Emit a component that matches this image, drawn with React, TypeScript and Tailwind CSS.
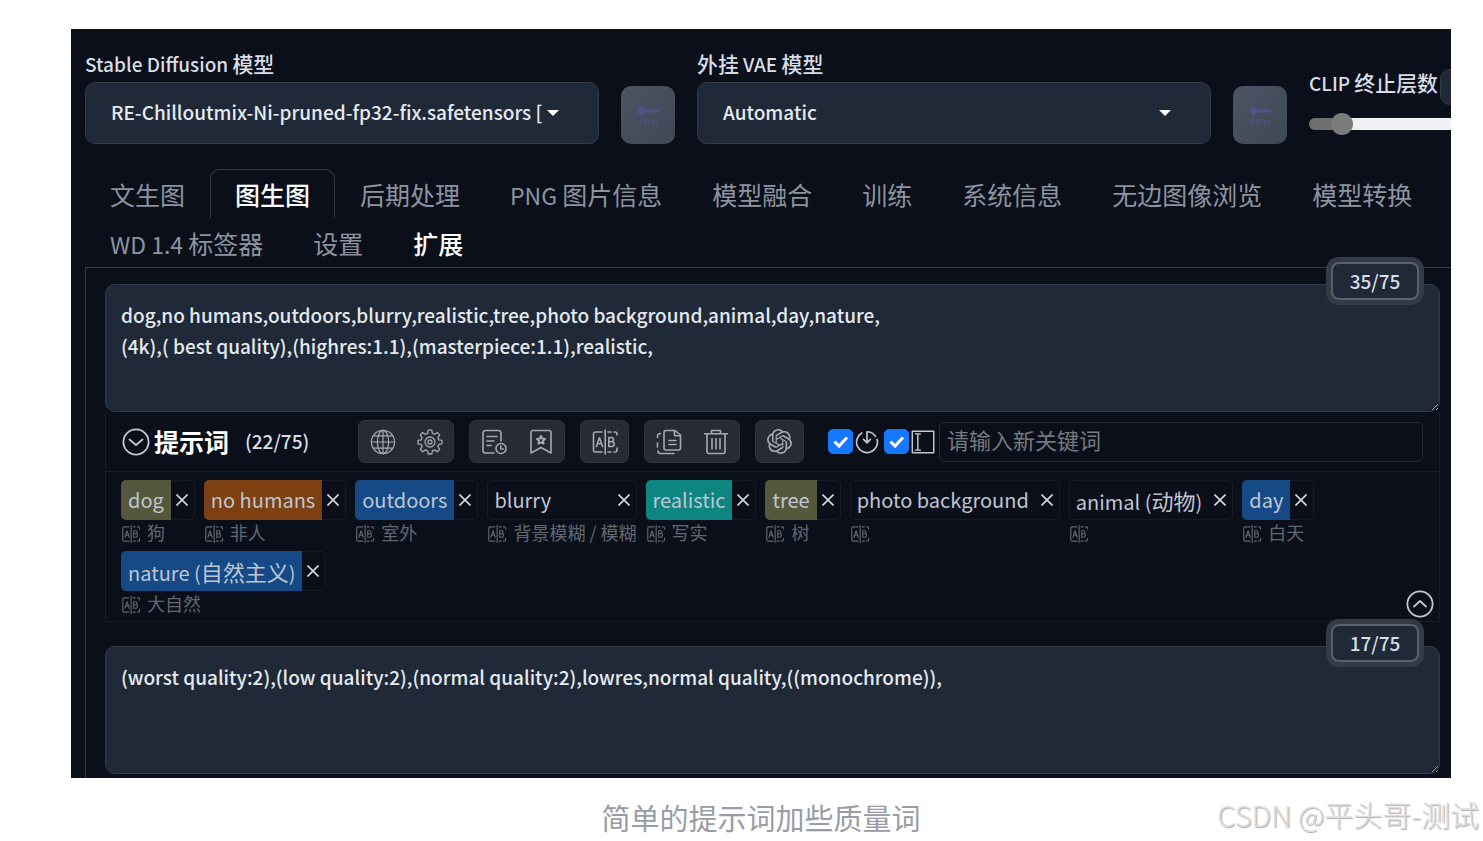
import React, { useState } from 'react';

const CJK_RUN = /([\u3400-\u9fff]+)/;

/** Sets Chinese runs slightly larger than the Latin text beside them. */
function Mixed({ text, cjk = 'text-[1.1em]' }: { text: string; cjk?: string }) {
  return (
    <>
      {text.split(CJK_RUN).map((part, i) =>
        CJK_RUN.test(part) ? (
          <span key={i} className={cjk}>
            {part}
          </span>
        ) : (
          part
        ),
      )}
    </>
  );
}

type IconProps = { className?: string };

function Icon({ className = 'size-7', children }: IconProps & { children: React.ReactNode }) {
  return (
    <svg
      viewBox="0 0 28 28"
      className={className}
      fill="none"
      stroke="currentColor"
      strokeWidth="1.6"
      strokeLinecap="round"
      strokeLinejoin="round"
      aria-hidden="true"
    >
      {children}
    </svg>
  );
}

const GlobeIcon = () => (
  <Icon>
    <g strokeWidth="1.2">
      <circle cx="14" cy="14" r="11.6" />
      <ellipse cx="14" cy="14" rx="5.6" ry="11.6" />
      <path d="M14 2.4v23.2M2.4 14h23.2M4.4 7.8h19.2M4.4 20.2h19.2" />
    </g>
  </Icon>
);

const GearIcon = () => (
  <Icon>
    <g strokeWidth="1.3">
      <path d="M12.2 2.2h3.6l.6 3.2 2.2.9 2.7-1.8 2.4 2.4-1.8 2.7.9 2.3 3.2.5v3.4l-3.2.6-.9 2.2 1.8 2.7-2.4 2.5-2.7-1.9-2.2 1-.6 3.1h-3.6l-.6-3.1-2.2-1-2.7 1.9-2.4-2.5 1.8-2.7-.9-2.2-3.2-.6v-3.4l3.2-.5.9-2.3-1.8-2.7 2.4-2.4 2.7 1.8 2.2-.9z" />
      <circle cx="14" cy="14" r="5" />
      <circle cx="14" cy="14" r="2" />
    </g>
  </Icon>
);

const HistoryIcon = () => (
  <Icon>
    <path d="M14 25H5.500a2.500 2.500 0 0 1-2.500-2.500V5a2.500 2.500 0 0 1 2.500-2.500h13A2.500 2.500 0 0 1 21 5v8" />
    <path d="M7 8.500h10M7 13h7M7 17.500h4" />
    <circle cx="21" cy="20.500" r="5" />
    <path d="M20.800 18v3h2.400" />
  </Icon>
);

const BookmarkIcon = () => (
  <Icon>
    <path d="M4 4.500A2 2 0 0 1 6 2.500h16a2 2 0 0 1 2 2V25l-10-5.500L4 25z" />
    <path d="m14 8 1.200 2.500 2.800.4-2 2 .5 2.700-2.500-1.300-2.500 1.300.5-2.700-2-2 2.800-.4z" strokeWidth="2" />
  </Icon>
);

const TranslateIcon = ({ className }: IconProps) => (
  <Icon className={className}>
    <path d="M11 4H4.500A2 2 0 0 0 2.500 6v16a2 2 0 0 0 2 2H11M14.200 2v24" />
    <path d="M17 4h3M23 4h1a2 2 0 0 1 2 2v1M26 20v2a2 2 0 0 1-2 2h-1M20 24h-3" />
    <path d="m5.500 18.500 3-9 3 9M6.500 15.700h4M17.800 9.500v9h3a2.400 2.400 0 0 0 0-4.800h-3 2.600a2.100 2.100 0 0 0 0-4.200z" />
  </Icon>
);

const CopyIcon = () => (
  <Icon>
    <path d="M9 6V4.500a2 2 0 0 1 2-2h9l5.500 4.500v13a2 2 0 0 1-2 2H11a2 2 0 0 1-2-2V6M19.500 2.800v5h5.500" />
    <path d="M14 12.500h7M14 16.500h7M5.500 5.500H5a2.500 2.500 0 0 0-2.500 2.500v1.500M2.500 15v4M3 23a2.500 2.500 0 0 0 2.500 2.500H19" />
  </Icon>
);

const TrashIcon = () => (
  <Icon>
    <path d="M2.500 5.800h23M9.500 5.500v-3h9v3M5 6v17.500a2 2 0 0 0 2 2h14a2 2 0 0 0 2-2V6" />
    <path d="M10 10.500v10.500M14 10.500v10.500M18 10.500v10.500" />
  </Icon>
);

const KnotIcon = () => (
  <svg viewBox="0 0 24 24" className="size-[25px]" fill="currentColor" aria-hidden="true">
    <path d="M22.2819 9.8211a5.9847 5.9847 0 0 0-.5157-4.9108 6.0462 6.0462 0 0 0-6.5098-2.9A6.0651 6.0651 0 0 0 4.9807 4.1818a5.9847 5.9847 0 0 0-3.9977 2.9 6.0462 6.0462 0 0 0 .7427 7.0966 5.98 5.98 0 0 0 .511 4.9107 6.051 6.051 0 0 0 6.5146 2.9001A5.9847 5.9847 0 0 0 13.2599 24a6.0557 6.0557 0 0 0 5.7718-4.2058 5.9894 5.9894 0 0 0 3.9977-2.9001 6.0557 6.0557 0 0 0-.7475-7.0729zm-9.022 12.6081a4.4755 4.4755 0 0 1-2.8764-1.0408l.1419-.0804 4.7783-2.7582a.7948.7948 0 0 0 .3927-.6813v-6.7369l2.02 1.1686a.071.071 0 0 1 .038.052v5.5826a4.504 4.504 0 0 1-4.4945 4.4944zm-9.6607-4.1254a4.4708 4.4708 0 0 1-.5346-3.0137l.142.0852 4.783 2.7582a.7712.7712 0 0 0 .7806 0l5.8428-3.3685v2.3324a.0804.0804 0 0 1-.0332.0615L9.74 19.9502a4.4992 4.4992 0 0 1-6.1408-1.6464zM2.3408 7.8956a4.485 4.485 0 0 1 2.3655-1.9728V11.6a.7664.7664 0 0 0 .3879.6765l5.8144 3.3543-2.0201 1.1685a.0757.0757 0 0 1-.071 0l-4.8303-2.7865A4.504 4.504 0 0 1 2.3408 7.872zm16.5963 3.8558L13.1038 8.364 15.1192 7.2a.0757.0757 0 0 1 .071 0l4.8303 2.7913a4.4944 4.4944 0 0 1-.6765 8.1042v-5.6772a.79.79 0 0 0-.407-.667zm2.0107-3.0231l-.142-.0852-4.7735-2.7818a.7759.7759 0 0 0-.7854 0L9.409 9.2297V6.8974a.0662.0662 0 0 1 .0284-.0615l4.8303-2.7866a4.4992 4.4992 0 0 1 6.6802 4.66zM8.3065 12.863l-2.02-1.1638a.0804.0804 0 0 1-.038-.0567V6.0742a4.4992 4.4992 0 0 1 7.3757-3.4537l-.142.0805L8.704 5.459a.7948.7948 0 0 0-.3927.6813zm1.0976-2.3654l2.602-1.4998 2.6069 1.4998v2.9994l-2.5974 1.4997-2.6067-1.4997Z" />
  </svg>
);

const ChevronCircle = ({ up = false }: { up?: boolean }) => (
  <Icon>
    <circle cx="14" cy="14" r="12.600" strokeWidth="1.8" />
    <path d={up ? 'm8 16.500 6-5.500 6 5.500' : 'm7.500 11.500 6.500 5.500 6.500-5.500'} strokeWidth="1.8" />
  </Icon>
);

const TimerIcon = () => (
  <Icon className="size-6">
    <path d="M14 2v12.500M14 2a12 12 0 0 1 10 5.500M8 3.500A12.200 12.200 0 1 0 25.800 11M10 11l4 4 4-4" strokeWidth="1.9" />
  </Icon>
);

const CursorBoxIcon = () => (
  <Icon className="size-6">
    <path d="M1.500 1.500h25v25h-25zM5 4.500h6M8 4.500v19M5 23.500h6" strokeWidth="1.7" />
  </Icon>
);

const CloseIcon = () => (
  <svg viewBox="0 0 12 12" className="size-3" stroke="currentColor" strokeWidth="1.6" aria-hidden="true">
    <path d="M.5.5l11 11M11.500.5l-11 11" />
  </svg>
);

function ModelSelect({ id, label, value }: { id: string; label: string; value: string }) {
  return (
    <div className="min-w-0 flex-1">
      <label htmlFor={id} className="block h-8 text-[19px] leading-[26px] font-medium">
        <Mixed text={label} />
      </label>
      <div className="relative">
        <select
          id={id}
          className="h-[62px] w-full appearance-none rounded-[10px] border border-[#333c49] bg-[#1f2937] px-[25px] pb-0.5 text-[19px] font-medium text-[#e5e9f0]"
        >
          <option>{value}</option>
        </select>
        <svg
          viewBox="0 0 12 6"
          className="pointer-events-none absolute top-7 right-10 h-1.5 w-3"
          fill="#fff"
          aria-hidden="true"
        >
          <path d="M0 0h12L6 6z" />
        </svg>
      </div>
    </div>
  );
}

function RefreshButton({ label }: { label: string }) {
  return (
    <button
      type="button"
      aria-label={label}
      className="flex h-[58px] w-[54px] shrink-0 items-center justify-center rounded-[10px] bg-linear-to-br from-[#4b5563] to-[#3f4855]"
    >
      <svg viewBox="0 0 28 28" className="size-7" fill="none" stroke="#57508c" aria-hidden="true">
        <path d="M8 6 4 10l4 4z" fill="#57508c" strokeWidth="2" strokeLinejoin="round" />
        <path d="M8 10h17" strokeWidth="3" />
        <path d="M6 19h5v6M6 19v6M14 19v6M14 19h3M19 19v6M23 19v6" strokeWidth="1.4" opacity=".7" />
      </svg>
    </button>
  );
}

const TABS = [
  '文生图', '图生图', '后期处理', 'PNG 图片信息', '模型融合', '训练', '系统信息',
  '无边图像浏览', '模型转换', 'WD 1.4 标签器', '设置', '扩展',
];

function tabClass(tab: string) {
  if (tab === '图生图') return 'rounded-t-[10px] border-[#343a45] font-medium text-white';
  if (tab === '扩展') return 'border-transparent font-medium text-white';
  return 'border-transparent text-[#8d94a0]';
}

function PromptBox({ label, count, value }: { label: string; count: string; value: string }) {
  const [text, setText] = useState(value);
  return (
    <div className="relative">
      <textarea
        aria-label={label}
        value={text}
        onChange={(e) => setText(e.target.value)}
        spellCheck={false}
        className="block h-32 w-full resize-y rounded-[10px] border border-[#343c48] bg-[#1f2937] px-[15px] py-[14px] text-[19px] leading-[31px] font-medium text-[#e5e9f0] outline-none"
      />
      <span className="absolute -top-[22px] right-[21px] flex h-[38px] w-[88px] items-center justify-center rounded-lg border-2 border-[#59616d] bg-[#1f2937] text-[19px] font-medium ring-5 ring-[#343b47]">
        {count}
      </span>
    </div>
  );
}

const TOOLS = [
  [['语言', GlobeIcon], ['设置', GearIcon]],
  [['历史', HistoryIcon], ['收藏', BookmarkIcon]],
  [['翻译', TranslateIcon]],
  [['复制', CopyIcon], ['清空', TrashIcon]],
  [['生成', KnotIcon]],
] as [string, React.ComponentType][][];

type Tag = { name: string; note: string; color?: string };

const OLIVE = 'bg-[#55583c]';
const BLUE = 'bg-[#154a86]';

const TAGS: Tag[] = [
  { name: 'dog', note: '狗', color: OLIVE },
  { name: 'no humans', note: '非人', color: 'bg-[#7d4010]' },
  { name: 'outdoors', note: '室外', color: BLUE },
  { name: 'blurry', note: '背景模糊 / 模糊' },
  { name: 'realistic', note: '写实', color: 'bg-[#0d8580]' },
  { name: 'tree', note: '树', color: OLIVE },
  { name: 'photo background', note: '' },
  { name: 'animal (动物)', note: '' },
  { name: 'day', note: '白天', color: BLUE },
  { name: 'nature (自然主义)', note: '大自然', color: BLUE },
];

function TagItem({ tag }: { tag: Tag }) {
  return (
    <li>
      <div className="flex h-10 justify-between rounded-[5px] border border-[#181c26] text-xl leading-10 text-[#bfc6d2]">
        <span className={`-m-px h-10 rounded-l-[5px] px-[7px] whitespace-nowrap ${tag.color ?? ''}`}>
          <Mixed text={tag.name} />
        </span>
        <button
          type="button"
          aria-label={`删除 ${tag.name}`}
          className="flex w-6 items-center justify-center text-[#d5d9e0]"
        >
          <CloseIcon />
        </button>
      </div>
      <div className="flex h-[26px] gap-1.5 text-[18px] leading-6 whitespace-nowrap text-[#636771]">
        <TranslateIcon className="mt-1 size-5" />
        {tag.note}
      </div>
    </li>
  );
}

function CheckOption({ label, children }: { label: string; children: React.ReactNode }) {
  return (
    <label className="flex items-center gap-0.5">
      <span className="relative flex">
        <input
          type="checkbox"
          defaultChecked
          aria-label={label}
          className="peer size-[25px] appearance-none rounded-[5px] border border-[#1677ff] checked:bg-[#1677ff]"
        />
        <svg
          viewBox="0 0 25 25"
          className="pointer-events-none absolute inset-0 hidden peer-checked:block"
          fill="none"
          stroke="#fff"
          strokeWidth="3"
          aria-hidden="true"
        >
          <path d="m6.500 12.500 4.500 4.500 8-8.500" />
        </svg>
      </span>
      {children}
    </label>
  );
}

export default function App() {
  return (
    <div className="min-h-screen overflow-x-hidden bg-white pt-[29px] font-['Noto_Sans_CJK_SC',sans-serif]">
      <main className="mr-8 ml-[71px] overflow-hidden bg-[#0b0f19] pt-[21px] pl-3.5 text-[#d9dde6]">
        <div className="flex items-end gap-[22px]">
          <ModelSelect
            id="model"
            label="Stable Diffusion 模型"
            value="RE-Chilloutmix-Ni-pruned-fp32-fix.safetensors ["
          />
          <RefreshButton label="刷新模型" />
          <ModelSelect id="vae" label="外挂 VAE 模型" value="Automatic" />
          <RefreshButton label="刷新 VAE" />
          <div className="w-[142px] shrink-0 self-stretch pt-[19px]">
            <div className="flex h-9 w-[264px]">
              <label htmlFor="clip" className="w-[131px] shrink-0 text-[19px] leading-[26px] font-medium whitespace-nowrap">
                <Mixed text="CLIP 终止层数" />
              </label>
              <input
                type="number"
                aria-label="CLIP 终止层数数值"
                defaultValue={2}
                className="h-9 w-20 rounded-[10px] border border-[#333c49] bg-[#1f2937] px-5 text-[19px]"
              />
            </div>
            <input
              id="clip"
              type="range"
              min={1}
              max={12}
              defaultValue={2}
              className="mt-[13px] block h-3 w-[264px] appearance-none rounded-md bg-linear-to-r from-[#6f6f70] from-[33px] to-[#eff1f5] to-[33px] [&::-webkit-slider-thumb]:size-[22px] [&::-webkit-slider-thumb]:appearance-none [&::-webkit-slider-thumb]:rounded-full [&::-webkit-slider-thumb]:bg-[#7b7b7c]"
            />
          </div>
        </div>

        <nav className="mt-[25px] flex flex-wrap">
          {TABS.map((tab) => (
            <button
              key={tab}
              type="button"
              className={`h-[49px] border-x border-t px-6 text-[23px] leading-[48px] whitespace-nowrap ${tabClass(tab)}`}
            >
              <Mixed text={tab} cjk="text-[25px]" />
            </button>
          ))}
        </nav>

        <div className="border-t border-l border-[#343a45] pt-4 pr-[11px] pb-[3px] pl-[19px]">
          <PromptBox
            label="正向提示词"
            count="35/75"
            value={
              'dog,no humans,outdoors,blurry,realistic,tree,photo background,animal,day,nature,\n(4k),( best quality),(highres:1.1),(masterpiece:1.1),realistic,'
            }
          />

          <section className="relative border-x border-b border-[#181d28]">
            <header className="flex h-[60px] items-center border-b border-[#181d28] px-4">
              <button type="button" aria-label="折叠" className="text-[#c4c8d0]">
                <ChevronCircle />
              </button>
              <h2 className="ml-1 pb-0.5 text-[25px] leading-10 font-bold text-white">提示词</h2>
              <span className="ml-4 w-[113px] text-[19px] font-medium">(22/75)</span>
              <div className="flex gap-[15px]">
                {TOOLS.map((group, i) => (
                  <div key={i} className="flex h-[43px] rounded-[7px] border border-[#30343f] bg-[#272b36] text-[#a4a9b3]">
                    {group.map(([label, Glyph]) => (
                      <button
                        key={label}
                        type="button"
                        aria-label={label}
                        className="flex w-[47px] items-center justify-center"
                      >
                        <Glyph />
                      </button>
                    ))}
                  </div>
                ))}
              </div>
              <div className="mr-1 ml-6 flex gap-[5px] text-[#c4c8d0]">
                <CheckOption label="自动翻译">
                  <TimerIcon />
                </CheckOption>
                <CheckOption label="自动补全">
                  <CursorBoxIcon />
                </CheckOption>
              </div>
              <input
                type="text"
                aria-label="新关键词"
                placeholder="请输入新关键词"
                className="h-10 min-w-0 flex-1 rounded-[5px] border border-[#252a35] bg-transparent px-[7px] pb-1.5 text-[22px] outline-none placeholder:text-[#757982]"
              />
            </header>
            <ul className="flex flex-wrap gap-x-[9px] gap-y-[5px] px-[15px] pt-2 pb-1">
              {TAGS.map((tag) => (
                <TagItem key={tag.name} tag={tag} />
              ))}
            </ul>
            <button type="button" aria-label="收起" className="absolute right-[5px] bottom-[3px] text-[#c4c8d0]">
              <ChevronCircle up />
            </button>
          </section>

          <div className="mt-6 pb-px">
            <PromptBox
              label="反向提示词"
              count="17/75"
              value="(worst quality:2),(low quality:2),(normal quality:2),lowres,normal quality,((monochrome)),"
            />
          </div>
        </div>
      </main>

      <footer className="relative mr-8 ml-[71px] pt-[18px] text-center text-[29px] leading-[42px] text-[#999ca6]">
        简单的提示词加些质量词
        <span className="absolute top-[15px] -right-7 font-light whitespace-nowrap text-[#dcdcdc] [text-shadow:1px_1px_1px_#aaa]">
          CSDN @平头哥-测试
        </span>
      </footer>
    </div>
  );
}
